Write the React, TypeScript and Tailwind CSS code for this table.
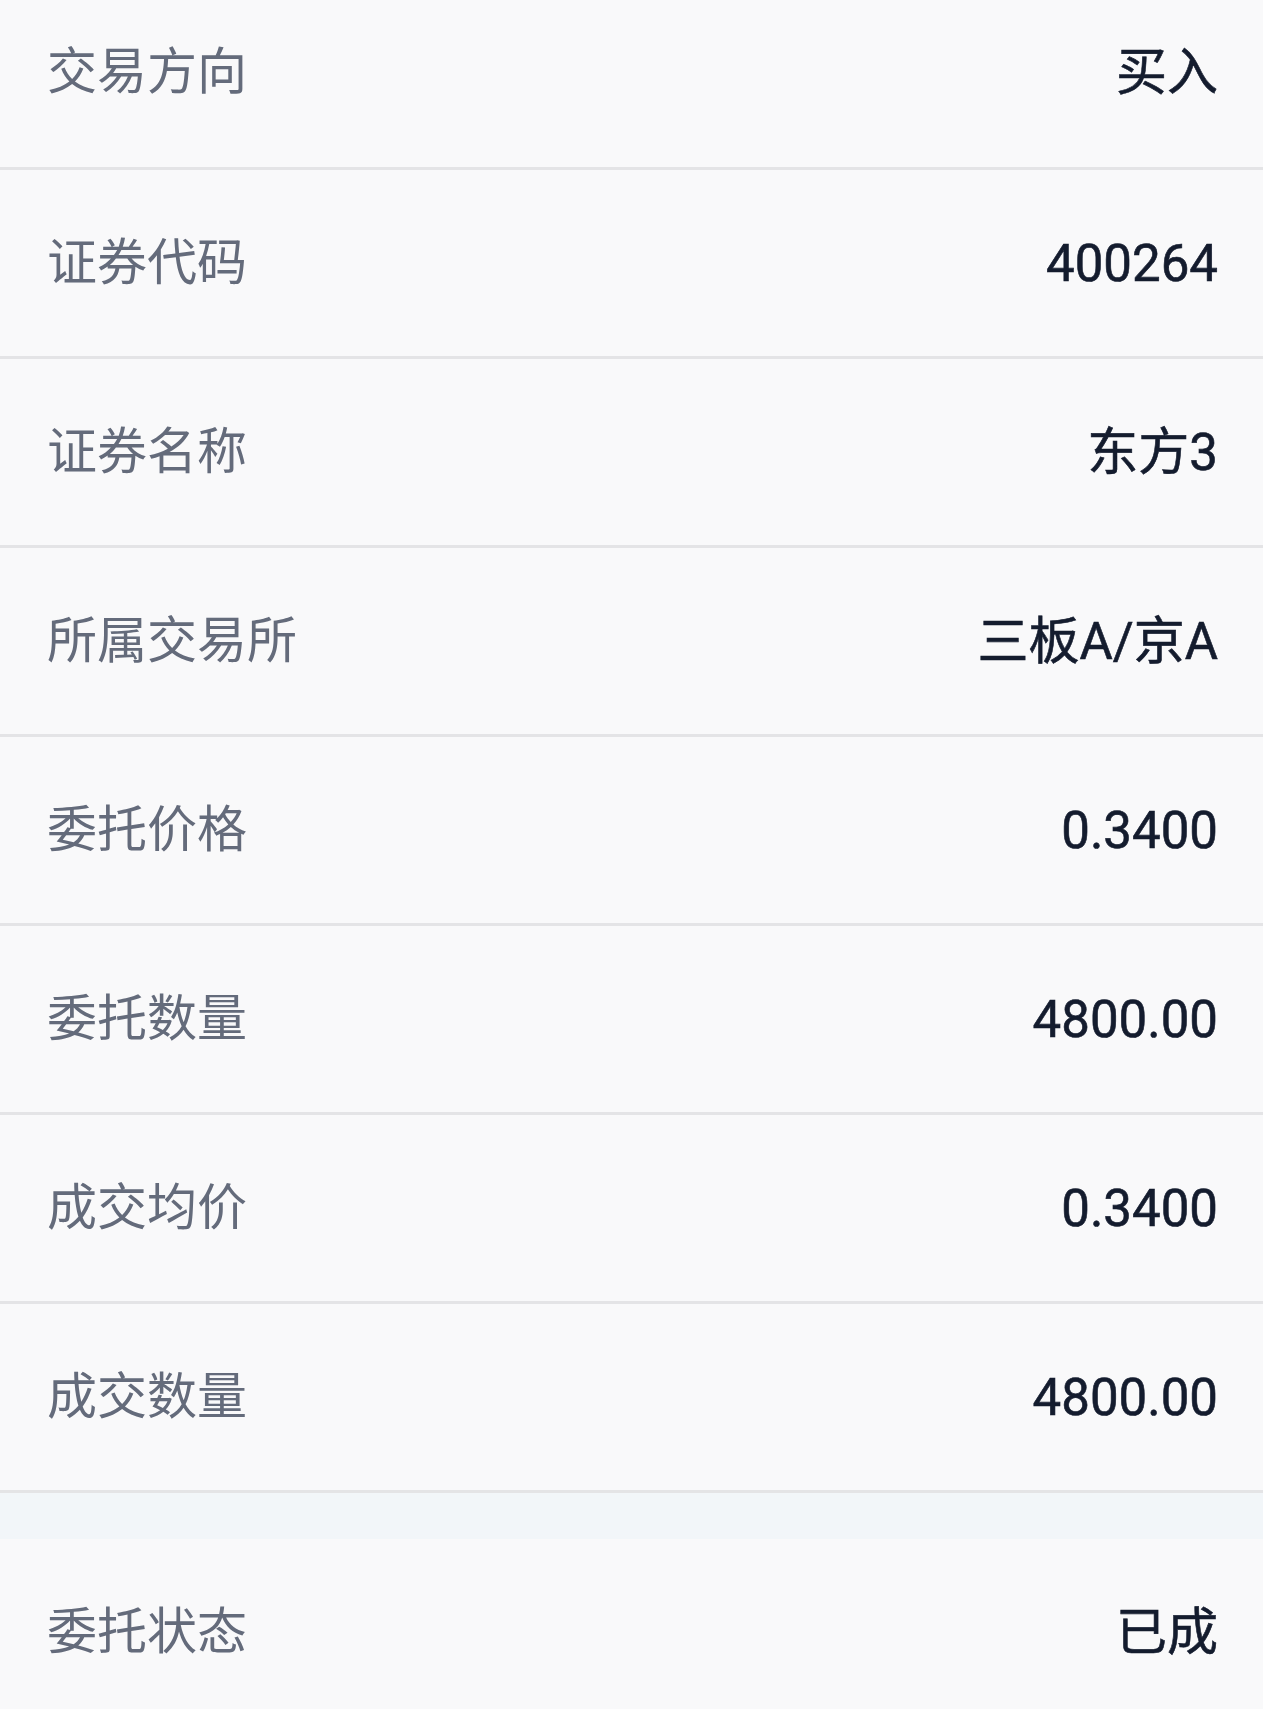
import React from "react";

const rows: [string, string][] = [
  ["交易方向", "买入"],
  ["证券代码", "400264"],
  ["证券名称", "东方3"],
  ["所属交易所", "三板A/京A"],
  ["委托价格", "0.3400"],
  ["委托数量", "4800.00"],
  ["成交均价", "0.3400"],
  ["成交数量", "4800.00"],
];

const font = { fontFamily: 'Roboto, "Noto Sans CJK SC", sans-serif' };

export default function App() {
  return (
    <div className="w-[1263px] h-[1709px] overflow-hidden bg-[#f9f9fa]" style={font}>
      {rows.map(([k, v], i) => (
        <div
          key={k}
          className={
            i === 0
              ? "flex items-center justify-between h-[170px] pb-[23px] pl-[47px] pr-[45px] border-b-[3px] border-[#e4e4e6]"
              : "flex items-center justify-between h-[189px] pl-[47px] pr-[45px] border-b-[3px] border-[#e4e4e6]"
          }
        >
          <span className="text-[50px] text-[#646b7b] leading-none">{k}</span>
          <span className="text-[51px] text-[#141c2e] leading-none [-webkit-text-stroke:0.6px_#141c2e]">{v}</span>
        </div>
      ))}
      <div className="h-[46px] bg-[#f2f6f9]" />
      <div className="flex items-center justify-between h-[186px] pl-[47px] pr-[45px]">
        <span className="text-[50px] text-[#646b7b] leading-none">委托状态</span>
        <span className="text-[51px] text-[#141c2e] leading-none [-webkit-text-stroke:0.6px_#141c2e]">已成</span>
      </div>
    </div>
  );
}
